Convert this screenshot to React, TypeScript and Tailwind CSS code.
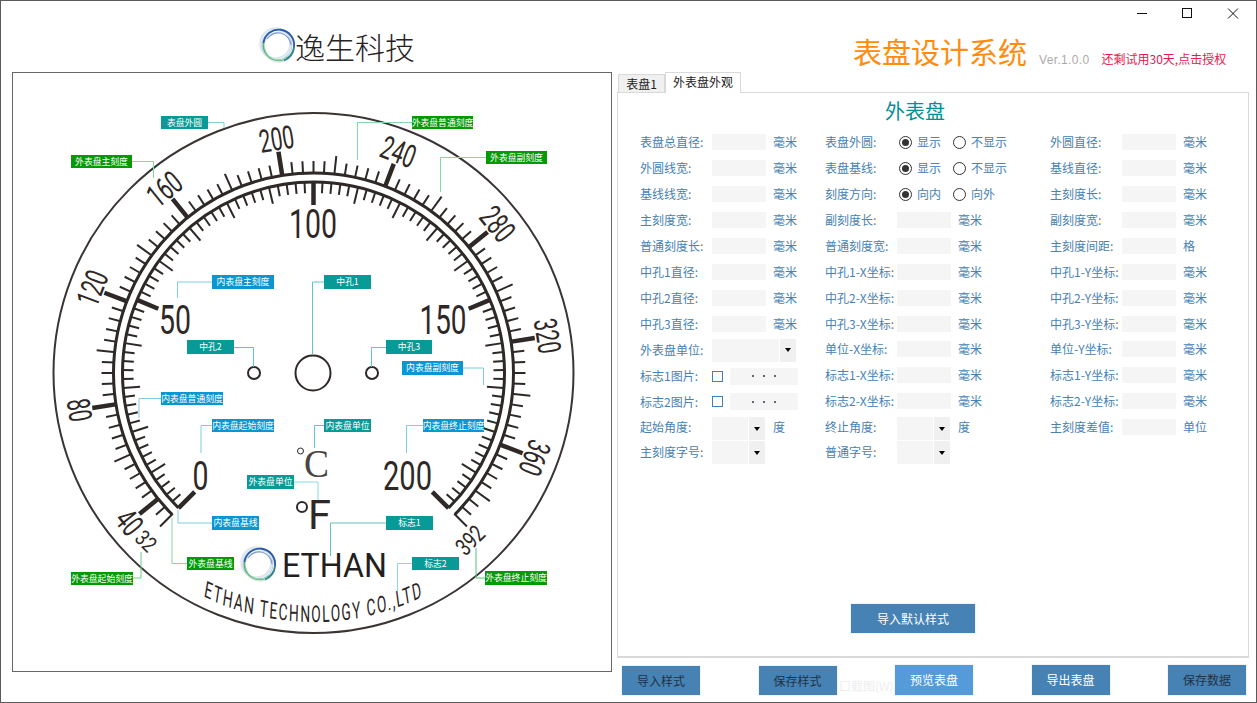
import React from "react";

const CX = 313.5;
const CY = 373;
const INK = "#2e2826";
const NUM = "Roboto, 'Liberation Sans', sans-serif";
const CJK = "'Noto Sans CJK SC', sans-serif";

const pt = (r: number, deg: number): [number, number] => {
  const a = (deg * Math.PI) / 180;
  return [CX + r * Math.sin(a), CY - r * Math.cos(a)];
};

function Tick({ a, r1, r2, w }: { a: number; r1: number; r2: number; w: number }) {
  const [x1, y1] = pt(r1, a);
  const [x2, y2] = pt(r2, a);
  return <line x1={x1} y1={y1} x2={x2} y2={y2} stroke={INK} strokeWidth={w} />;
}

function Arc({ r, w }: { r: number; w: number }) {
  const [x1, y1] = pt(r, -135);
  const [x2, y2] = pt(r, 135);
  return <path d={`M${x1} ${y1} A${r} ${r} 0 1 1 ${x2} ${y2}`} fill="none" stroke={INK} strokeWidth={w} />;
}

function Num({ x, y, rot = 0, fs, len, text }: { x: number; y: number; rot?: number; fs: number; len: number; text: string }) {
  return (
    <g transform={`translate(${x} ${y}) rotate(${rot})`}>
      <text
        y={fs * 0.355}
        textAnchor="middle"
        fontFamily={NUM}
        fontWeight={400}
        fontSize={fs}
        fill={INK}
        textLength={len}
        lengthAdjust="spacingAndGlyphs"
      >
        {text}
      </text>
    </g>
  );
}

const TEAL = "#089a96";
const GREEN = "#049a04";
const BLUE = "#0a96d2";

type Tag = { t: string; x: number; y: number; w: number; h: number; c: string; line: string; lc: string };
const tags: Tag[] = [
  { t: "表盘外圆", x: 161, y: 116, w: 47, h: 13, c: TEAL, line: "M208 122.5H224V128", lc: "#7fd0cf" },
  { t: "外表盘普通刻度", x: 412, y: 116, w: 61, h: 13, c: GREEN, line: "M412 122.5H357.5V160", lc: "#86d6a6" },
  { t: "外表盘副刻度", x: 486, y: 151, w: 61, h: 13, c: GREEN, line: "M486 157.5H440.5V192", lc: "#86d6a6" },
  { t: "外表盘主刻度", x: 71, y: 155, w: 61, h: 13, c: GREEN, line: "M132 161.5H153.5V178", lc: "#86d6a6" },
  { t: "内表盘主刻度", x: 212, y: 275, w: 62, h: 14, c: BLUE, line: "M212 282H177.5V298", lc: "#7fcde0" },
  { t: "中孔1", x: 324, y: 275, w: 47, h: 14, c: TEAL, line: "M324 282H312.5V355", lc: "#62c4c8" },
  { t: "中孔2", x: 187, y: 340, w: 47, h: 14, c: TEAL, line: "M234 347.5H253.5V367", lc: "#62c4c8" },
  { t: "中孔3", x: 386, y: 340, w: 46, h: 14, c: TEAL, line: "M386 347.5H371.5V367", lc: "#62c4c8" },
  { t: "内表盘副刻度", x: 402, y: 361, w: 61, h: 14, c: BLUE, line: "M463 368H483.5V385", lc: "#7fcde0" },
  { t: "内表盘普通刻度", x: 161, y: 392, w: 62, h: 13, c: BLUE, line: "M161 398.5H139V418", lc: "#7fcde0" },
  { t: "内表盘起始刻度", x: 212, y: 419, w: 62, h: 13, c: BLUE, line: "M212 425.5H201V453", lc: "#7fcde0" },
  { t: "内表盘单位", x: 324, y: 419, w: 47, h: 13, c: TEAL, line: "M324 425.5H314.5V448", lc: "#62c4c8" },
  { t: "内表盘终止刻度", x: 423, y: 419, w: 61, h: 13, c: BLUE, line: "M423 425.5H406.5V453", lc: "#7fcde0" },
  { t: "外表盘单位", x: 247, y: 475, w: 47, h: 14, c: TEAL, line: "M294 482H318V500", lc: "#8bd8dc" },
  { t: "内表盘基线", x: 212, y: 516, w: 47, h: 14, c: BLUE, line: "M212 523H178V510", lc: "#7fcde0" },
  { t: "外表盘基线", x: 187, y: 557, w: 47, h: 13, c: GREEN, line: "M187 563.5H172V518", lc: "#86d6a6" },
  { t: "外表盘起始刻度", x: 71, y: 572, w: 62, h: 13, c: GREEN, line: "M133 578H141V552", lc: "#72c88f" },
  { t: "标志1", x: 386, y: 516, w: 47, h: 14, c: TEAL, line: "M386 523H330.5V556", lc: "#62c4b8" },
  { t: "标志2", x: 412, y: 557, w: 47, h: 13, c: TEAL, line: "M412 563.5H397.5V591", lc: "#8bd8dc" },
  { t: "外表盘终止刻度", x: 485, y: 571, w: 62, h: 14, c: GREEN, line: "M485 578H476V548", lc: "#56c079" },
];

function Logo({ x, y }: { x: number; y: number }) {
  return (
    <g transform={`translate(${x} ${y})`} fill="none">
      <circle cx={-2.5} cy={-2.5} r={15} stroke="#dfe7ee" strokeWidth={2.5} />
      <circle cx={-1} cy={-1} r={15} stroke="#c3d3e6" strokeWidth={1.2} />
      <circle cx={1} cy={1} r={15} stroke="#dfe8e6" strokeWidth={1.5} />
      <path d="M-14.5 -3A15 15 0 0 1 16 1" stroke="#2a5ca8" strokeWidth={1.8} />
      <path d="M-11 -7A13 13 0 0 1 13 -1" stroke="#7b9ccb" strokeWidth={1.2} />
      <path d="M16 1A15 15 0 0 1 -14.5 -3" stroke="#58b27d" strokeWidth={1.6} />
      <path d="M16 1A15 15 0 0 1 6 14.5" stroke="#2f7f98" strokeWidth={1.6} />
      <path d="M-13 3A14 14 0 0 0 8 12" stroke="#a5dcb9" strokeWidth={1} />
    </g>
  );
}

const BRAND_SX = 0.6;
const BRAND_R = 249;

function Dial() {
  const outer: React.ReactNode[] = [];
  for (let v = 32; v <= 392; v += 4) {
    const a = -135 + (v - 32) * 0.75;
    if (v % 40 === 0) outer.push(<Tick key={v} a={a} r1={199} r2={224} w={4.5} />);
    else if (v === 32 || v === 392) outer.push(<Tick key={v} a={a} r1={199} r2={217} w={2} />);
    else if (v % 20 === 0) outer.push(<Tick key={v} a={a} r1={199} r2={218} w={2} />);
    else outer.push(<Tick key={v} a={a} r1={199} r2={212} w={2} />);
  }
  const inner: React.ReactNode[] = [];
  for (let v = 0; v <= 200; v += 2) {
    const a = -135 + v * 1.35;
    if (v % 50 === 0) inner.push(<Tick key={v} a={a} r1={191} r2={168} w={4.5} />);
    else if (v % 10 === 0) inner.push(<Tick key={v} a={a} r1={191} r2={174} w={2} />);
    else inner.push(<Tick key={v} a={a} r1={191} r2={180} w={2} />);
  }
  const outerNums = [40, 80, 120, 160, 200, 240, 280, 320, 360].map((v) => {
    const a = -135 + (v - 32) * 0.75;
    const [x, y] = pt(237, a);
    const flip = v === 40 || v === 80;
    return <Num key={v} x={x} y={y} rot={flip ? a + 180 : a} fs={32} len={v >= 100 ? 35 : 23} text={String(v)} />;
  });
  const rx = BRAND_R / BRAND_SX;
  return (
    <svg viewBox="13 73 598 598" width={598} height={598} className="block">
      <circle cx={CX} cy={CY} r={260} fill="none" stroke="#3a3533" strokeWidth={2} />
      {outer}
      {inner}
      <Arc r={200} w={3} />
      <Arc r={191} w={3} />
      {outerNums}
      <Num x={146} y={541} rot={45} fs={22} len={20} text="32" />
      <Num x={470} y={540} rot={-45} fs={24} len={30} text="392" />
      <Num x={313} y={223} fs={41} len={48} text="100" />
      <Num x={175} y={319} fs={41} len={32} text="50" />
      <Num x={443} y={319} fs={41} len={47} text="150" />
      <Num x={200.5} y={475} fs={41} len={16} text="0" />
      <Num x={407.5} y={475} fs={41} len={49} text="200" />

      <circle cx={313} cy={373} r={17.5} fill="none" stroke={INK} strokeWidth={2} />
      <circle cx={254} cy={373} r={6} fill="none" stroke={INK} strokeWidth={2} />
      <circle cx={372} cy={373} r={6} fill="none" stroke={INK} strokeWidth={2} />

      <circle cx={300.5} cy={451} r={3} fill="none" stroke={INK} strokeWidth={1} />
      <text x={304} y={477} fontFamily="'Liberation Serif', serif" fontSize={41} fill="#4a4442" textLength={25} lengthAdjust="spacingAndGlyphs">
        C
      </text>
      <circle cx={302} cy={507} r={5} fill="none" stroke={INK} strokeWidth={2} />
      <text x={308} y={529} fontFamily={NUM} fontSize={41} fill={INK} textLength={23} lengthAdjust="spacingAndGlyphs">
        F
      </text>

      <Logo x={259} y={565} />
      <text x={282} y={577} fontFamily={NUM} fontSize={34} fill="#231f1e" textLength={105} lengthAdjust="spacingAndGlyphs">
        ETHAN
      </text>
      <g transform={`translate(${CX} ${CY}) scale(${BRAND_SX} 1)`}>
        <path id="brand-arc" d={`M${-rx} 0A${rx} ${BRAND_R} 0 0 0 ${rx} 0`} fill="none" />
        <text fontFamily={NUM} fontSize={23} fill="#2a2523" textAnchor="middle" letterSpacing={2.5}>
          <textPath href="#brand-arc" startOffset="50%">
            ETHAN TECHNOLOGY CO.,LTD
          </textPath>
        </text>
      </g>

      {tags.map((g) => (
        <g key={g.t}>
          <path d={g.line} fill="none" stroke={g.lc} strokeWidth={1} />
          <rect x={g.x} y={g.y} width={g.w} height={g.h} fill={g.c} />
          <text x={g.x + g.w / 2} y={g.y + g.h / 2 + 3.3} textAnchor="middle" fontFamily={CJK} fontSize={8.8} fill="#ffffff">
            {g.t}
          </text>
        </g>
      ))}
    </svg>
  );
}

function Inp({ className = "w-[54px] h-4" }: { className?: string }) {
  return <div className={`bg-[#f5f5f5] shrink-0 ${className}`} />;
}

function Caret() {
  return <div className="w-0 h-0 border-x-[3.5px] border-x-transparent border-t-[4px] border-t-black" />;
}

function Sel({ big = false, extra = "" }: { big?: boolean; extra?: string }) {
  return (
    <div className={`flex gap-px shrink-0 ${extra}`}>
      <div className={`bg-[#f5f5f5] h-[23px] ${big ? "w-[67px]" : "w-9"}`} />
      <div className="bg-[#f0f0f0] h-[23px] w-4 flex items-center justify-center">
        <Caret />
      </div>
    </div>
  );
}

function Radio({ on, label, w }: { on: boolean; label: string; w: string }) {
  return (
    <div className={`flex items-center gap-[5px] ${w}`}>
      <div className="w-[13px] h-[13px] rounded-full border border-[#333] flex items-center justify-center shrink-0">
        {on && <div className="w-[7px] h-[7px] rounded-full bg-[#333]" />}
      </div>
      <span>{label}</span>
    </div>
  );
}

function Field({ label, unit = "毫米", up = false }: { label: string; unit?: string; up?: boolean }) {
  return (
    <div className={`flex items-center h-full ${up ? "pb-[2px]" : ""}`}>
      <span className="w-[72px] shrink-0 whitespace-nowrap">{label}</span>
      <Inp />
      <span className="ml-[7px]">{unit}</span>
    </div>
  );
}

function Lab({ label, children }: { label: string; children: React.ReactNode }) {
  return (
    <div className="flex items-center h-full">
      <span className="w-[72px] shrink-0 whitespace-nowrap">{label}</span>
      {children}
    </div>
  );
}

function Row({ h = "h-[26px]", children }: { h?: string; children: React.ReactNode }) {
  return <div className={`grid grid-cols-[185px_225px_1fr] ${h}`}>{children}</div>;
}

function FileCell({ label }: { label: string }) {
  return (
    <Lab label={label}>
      <div className="w-[11px] h-[11px] border-[1.5px] border-[#3f80b8] shrink-0" />
      <div className="ml-[7px] w-[68px] h-[17px] bg-[#f5f5f5] flex items-center justify-center gap-[9px] shrink-0">
        <span className="w-[2px] h-[2px] bg-[#667]" />
        <span className="w-[2px] h-[2px] bg-[#667]" />
        <span className="w-[2px] h-[2px] bg-[#667]" />
      </div>
    </Lab>
  );
}

function Btn({ children, className }: { children: React.ReactNode; className: string }) {
  return <div className={`relative w-[78px] flex items-center justify-center text-xs outline outline-1 outline-[#eef4fa] ${className}`}>{children}</div>;
}

export default function App() {
  return (
    <div className="w-[1257px] h-[703px] border border-[#5a5a5a] bg-white flex overflow-hidden relative font-['Noto_Sans_CJK_SC',sans-serif]">
      <div className="w-[616px] shrink-0 flex flex-col pl-[11px]">
        <div className="h-[71px] flex items-center pt-[19px] pl-[246px]">
          <svg viewBox="0 0 40 40" width={40} height={40} className="shrink-0 mr-[-3px]">
            <Logo x={20} y={20} />
          </svg>
          <span className="text-[30px] leading-none font-light text-[#26221f] whitespace-nowrap">逸生科技</span>
        </div>
        <div className="w-[600px] h-[600px] border border-[#666]">
          <Dial />
        </div>
      </div>

      <div className="flex-1 flex flex-col relative">
        <div className="h-[71px] relative">
          <div className="flex justify-end items-start">
            <svg width={119} height={24} viewBox="1137 1 119 24" className="block">
              <line x1={1137} y1={13.5} x2={1147} y2={13.5} stroke="#111" />
              <rect x={1182.5} y={8.5} width={9} height={9} fill="none" stroke="#111" />
              <path d="M1228 8.5L1238 18.5M1238 8.5L1228 18.5" stroke="#111" fill="none" />
            </svg>
          </div>
          <div className="flex items-baseline pl-[236px] pt-[8px] whitespace-nowrap">
            <span className="text-[29px] leading-[36px] text-[#ff8c0f]">表盘设计系统</span>
            <span className="ml-[12px] text-xs font-['Liberation_Sans',sans-serif] text-[#aaaaaa] tracking-[0.35px]">Ver.1.0.0</span>
            <span className="ml-[12px] text-xs text-[#e8174e]">还剩试用30天,点击授权</span>
          </div>
        </div>

        <div className="flex h-[20px] items-end relative z-10 pl-[1px]">
          <div className="w-[47px] h-[18px] bg-[#f0f0f0] border border-b-0 border-[#d9d9d9] text-xs leading-[18px] text-center text-[#222]">表盘1</div>
          <div className="w-[76px] h-[21px] bg-white border border-b-0 border-[#d9d9d9] text-xs leading-[17px] text-center text-[#222] mb-[-1px]">外表盘外观</div>
        </div>

        <div className="w-[632px] h-[566px] border border-[#d9d9d9] border-b-2 flex flex-col text-xs leading-none text-[#4682b4]">
          <div className="h-[36px] flex justify-center items-center text-[20px] text-[#048e92] pr-[36px]">外表盘</div>
          <div className="pl-[22px]">
            <Row>
              <Field label="表盘总直径:" />
              <Lab label="表盘外圆:">
                <div className="flex pl-[2px]">
                  <Radio on label="显示" w="w-[54px]" />
                  <Radio on={false} label="不显示" w="w-[60px]" />
                </div>
              </Lab>
              <Field label="外圆直径:" />
            </Row>
            <Row>
              <Field label="外圆线宽:" />
              <Lab label="表盘基线:">
                <div className="flex pl-[2px]">
                  <Radio on label="显示" w="w-[54px]" />
                  <Radio on={false} label="不显示" w="w-[60px]" />
                </div>
              </Lab>
              <Field label="基线直径:" />
            </Row>
            <Row>
              <Field label="基线线宽:" />
              <Lab label="刻度方向:">
                <div className="flex pl-[2px]">
                  <Radio on label="向内" w="w-[54px]" />
                  <Radio on={false} label="向外" w="w-[60px]" />
                </div>
              </Lab>
              <Field label="主刻度长:" />
            </Row>
            <Row>
              <Field label="主刻度宽:" />
              <Field label="副刻度长:" />
              <Field label="副刻度宽:" />
            </Row>
            <Row>
              <Field label="普通刻度长:" />
              <Field label="普通刻度宽:" />
              <Field label="主刻度间距:" unit="格" />
            </Row>
            <Row>
              <Field label="中孔1直径:" />
              <Field label="中孔1-X坐标:" />
              <Field label="中孔1-Y坐标:" />
            </Row>
            <Row>
              <Field label="中孔2直径:" />
              <Field label="中孔2-X坐标:" />
              <Field label="中孔2-Y坐标:" />
            </Row>
            <Row>
              <Field label="中孔3直径:" />
              <Field label="中孔3-X坐标:" />
              <Field label="中孔3-Y坐标:" />
            </Row>
            <Row>
              <Lab label="外表盘单位:">
                <Sel big />
              </Lab>
              <Field label="单位-X坐标:" up />
              <Field label="单位-Y坐标:" up />
            </Row>
            <Row>
              <FileCell label="标志1图片:" />
              <Field label="标志1-X坐标:" up />
              <Field label="标志1-Y坐标:" up />
            </Row>
            <Row h="h-[25px]">
              <FileCell label="标志2图片:" />
              <Field label="标志2-X坐标:" up />
              <Field label="标志2-Y坐标:" up />
            </Row>
            <Row>
              <Lab label="起始角度:">
                <Sel extra="mt-[3px]" />
                <span className="ml-[8px]">度</span>
              </Lab>
              <Lab label="终止角度:">
                <Sel extra="mt-[3px]" />
                <span className="ml-[8px]">度</span>
              </Lab>
              <Field label="主刻度差值:" unit="单位" />
            </Row>
            <Row h="h-[24px]">
              <Lab label="主刻度字号:">
                <Sel extra="mt-px" />
              </Lab>
              <Lab label="普通字号:">
                <Sel extra="mt-px" />
              </Lab>
              <div />
            </Row>
          </div>
          <div className="flex-1 flex justify-center items-end pb-[23px] pr-[40px]">
            <div className="w-[124px] h-[29px] bg-[#4682b4] text-white flex items-center justify-center outline outline-1 outline-[#eef4fa]">导入默认样式</div>
          </div>
        </div>

        <div className="flex justify-between items-end h-[37px] pl-[5px] w-[629px] relative">
          <span className="absolute left-[210px] top-[20px] text-xs text-[#eeeeee] whitespace-nowrap">窗口截图(W)</span>
          <Btn className="h-[29px] bg-[#4682b4] text-[#1f3347]">导入样式</Btn>
          <Btn className="h-[29px] bg-[#4682b4] text-[#1f3347]">保存样式</Btn>
          <Btn className="h-[30px] bg-[#559bd9] text-white">预览表盘</Btn>
          <Btn className="h-[30px] bg-[#4682b4] text-white">导出表盘</Btn>
          <Btn className="h-[30px] bg-[#4682b4] text-[#1f3347]">保存数据</Btn>
        </div>
      </div>
    </div>
  );
}
